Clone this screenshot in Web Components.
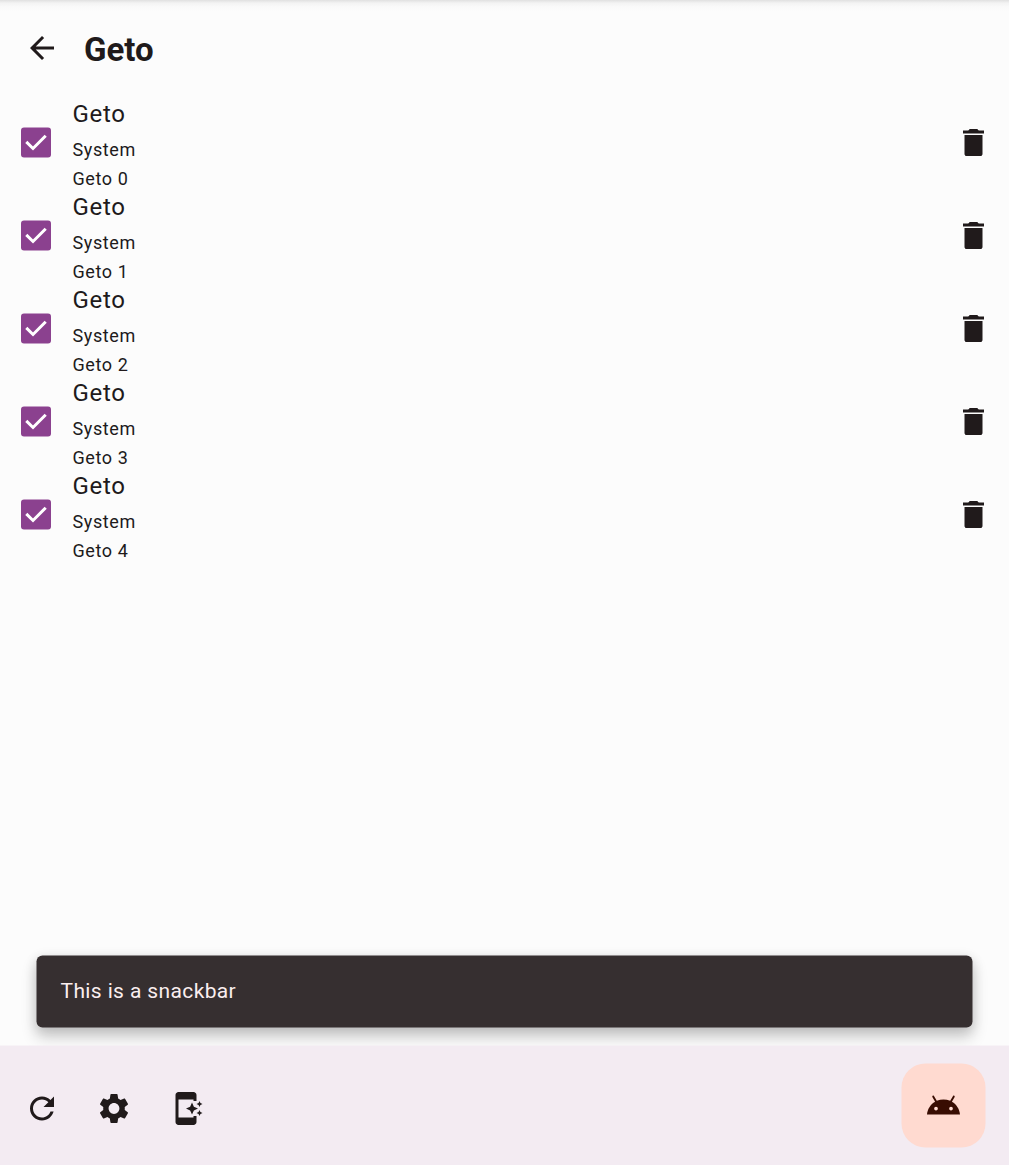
<!DOCTYPE html>
<html lang="en"><head><meta charset="utf-8"><title>Geto</title>
<style>html,body{margin:0;height:100%;overflow:hidden}body{font-family:Roboto,sans-serif;color:#201a1b;background:#fcfcfc}</style></head>
<body>
<geto-screen></geto-screen>
<script>
const ICONS = {
 back:'<path d="M20 11H7.83l5.59-5.59L12 4l-8 8 8 8 1.41-1.41L7.83 13H20v-2z"/>',
 trash:'<path d="M6 19.6c0 .8.6 1.4 1.4 1.4h9.2c.8 0 1.4-.6 1.4-1.4V7H6v12.6zM19 4h-3.5l-1-1h-5l-1 1H5v2h14V4z"/>',
 refresh:'<path d="M17.65 6.35C16.2 4.9 14.21 4 12 4c-4.42 0-7.99 3.58-7.99 8s3.57 8 7.99 8c3.73 0 6.84-2.55 7.73-6h-2.08c-.82 2.33-3.04 4-5.65 4-3.31 0-6-2.69-6-6s2.69-6 6-6c1.66 0 3.14.69 4.22 1.78L13 11h7V4l-2.35 2.35z"/>',
 gear:'<path d="M19.14 12.94c.04-.3.06-.61.06-.94 0-.32-.02-.64-.07-.94l2.03-1.58c.18-.14.23-.41.12-.61l-1.92-3.32c-.12-.22-.37-.29-.59-.22l-2.39.96c-.5-.38-1.03-.7-1.62-.94l-.36-2.54c-.04-.24-.24-.41-.48-.41h-3.84c-.24 0-.43.17-.47.41l-.36 2.54c-.59.24-1.13.57-1.62.94l-2.39-.96c-.22-.08-.47 0-.59.22L2.74 8.87c-.12.21-.08.47.12.61l2.03 1.58c-.05.3-.09.63-.09.94s.02.64.07.94l-2.03 1.58c-.18.14-.23.41-.12.61l1.92 3.32c.12.22.37.29.59.22l2.39-.96c.5.38 1.03.7 1.62.94l.36 2.54c.05.24.24.41.48.41h3.84c.24 0 .44-.17.47-.41l.36-2.54c.59-.24 1.13-.56 1.62-.94l2.39.96c.22.08.47 0 .59-.22l1.92-3.32c.12-.22.07-.47-.12-.61l-2.01-1.58zM12 15.6c-1.98 0-3.6-1.62-3.6-3.6s1.62-3.6 3.6-3.6 3.6 1.62 3.6 3.6-1.62 3.6-3.6 3.6z"/>',
 shortcut:'<path d="M17 18H7V6h10v1h2V3c0-1.1-.9-2-2-2H7c-1.1 0-2 .9-2 2v18c0 1.1.9 2 2 2h10c1.1 0 2-.9 2-2v-4h-2v1z"/><path d="M16 8l1.25 2.75L20 12l-2.75 1.25L16 16l-1.25-2.75L12 12l2.75-1.25zM21 7l.62 1.38L23 9l-1.38.62L21 11l-.62-1.38L19 9l1.38-.62zM21 13l.62 1.38L23 15l-1.38.62L21 17l-.62-1.38L19 15l1.38-.62z"/>',
 android:'<path d="M17.6 9.48l1.84-3.18c.16-.31.04-.69-.26-.85-.29-.15-.65-.06-.83.22l-1.88 3.24a11.46 11.46 0 0 0-8.94 0L5.65 5.67c-.19-.29-.58-.38-.87-.2-.28.18-.37.54-.22.83L6.4 9.48C3.3 11.25 1.28 14.44 1 18h22c-.28-3.56-2.3-6.75-5.4-8.52zM7 15.25a1.25 1.25 0 1 1 0-2.5 1.25 1.25 0 0 1 0 2.5zm10 0a1.25 1.25 0 1 1 0-2.5 1.25 1.25 0 0 1 0 2.5z"/>',
};
class Base extends HTMLElement{ constructor(){super();this.attachShadow({mode:'open'});} connectedCallback(){this.shadowRoot.innerHTML=this.view();} }
customElements.define('geto-icon',class extends Base{view(){return `<style>:host{display:flex;flex:none;width:72px;height:72px;align-items:center;justify-content:center}svg{display:block;width:36px;height:36px;fill:currentColor}</style><svg viewBox="0 0 24 24">${ICONS[this.getAttribute('name')]}</svg>`}});
customElements.define('geto-checkbox',class extends Base{view(){return `<style>:host{display:flex;flex:none;width:72px;justify-content:center}svg{width:30px;height:31px}</style><svg viewBox="0 0 30 31"><g transform="translate(0 .5)"><rect width="30" height="30" rx="3" fill="#8b418f"/><path d="M5.3 14.4 12 21 24.7 8.2" fill="none" stroke="#fff" stroke-width="3"/></g></svg>`}});
customElements.define('geto-top-bar',class extends Base{view(){return `<style>:host{display:flex;flex:none;height:96px;box-sizing:border-box;padding-left:6px;align-items:center;background:linear-gradient(#e0e0e0,#f3f3f3 3px,#fafafa 7px,#fcfcfc 11px)}h1{margin:3px 0 0 6px;font-size:33px;line-height:42px;font-weight:700}</style><geto-icon name="back"></geto-icon><h1><slot></slot></h1>`}});
customElements.define('geto-setting',class extends Base{view(){return `<style>:host{display:flex;align-items:center;height:93px}.t{flex:1;display:flex;flex-direction:column;height:93px;padding-left:.5px;font-size:18px;line-height:24px;letter-spacing:.6px}.a{font-size:24px;line-height:36px;letter-spacing:.7px}.b{margin-top:6px}.c{margin-top:5px}geto-icon{margin-top:1px;transform:translate(.5px,-.5px)}</style><geto-checkbox></geto-checkbox><div class="t"><div class="a">Geto</div><div class="b">System</div><div class="c"><slot></slot></div></div><geto-icon name="trash"></geto-icon>`}});
customElements.define('geto-snackbar',class extends Base{view(){return `<style>:host{display:flex;flex:none;align-items:center;height:72px;margin:0 36px 18px 37px;padding:0 0 2px 24px;box-sizing:border-box;background:#362f30;color:#faeeef;border-radius:6px;font-size:21px;line-height:30px;letter-spacing:.375px;transform:translate(-.5px,-.5px);box-shadow:0 9px 15px rgba(0,0,0,.2),0 2px 12px rgba(0,0,0,.1)}</style><span><slot></slot></span>`}});
customElements.define('geto-fab',class extends Base{view(){return `<style>:host{display:flex;width:84px;height:84px;align-items:center;justify-content:center;border-radius:24px;background:#ffdad0;color:#380d02;transform:translate(.5px,-.5px)}</style><geto-icon name="android"></geto-icon>`}});
customElements.define('geto-bottom-bar',class extends Base{view(){return `<style>:host{display:flex;flex:none;height:119px;box-sizing:border-box;background:#f3ebf2;box-shadow:0 -.5px #f3ebf2;padding:18px 24px 0 6px;align-items:flex-start;position:relative}nav{display:flex;flex:1;padding-top:9px;transform:translateY(-.5px)}</style><nav><geto-icon name="refresh"></geto-icon><geto-icon name="gear"></geto-icon><geto-icon name="shortcut"></geto-icon></nav><geto-fab></geto-fab>`}});
customElements.define('geto-screen',class extends Base{view(){return `<style>:host{display:flex;flex-direction:column;height:100vh}main{flex:1}</style><geto-top-bar>Geto</geto-top-bar><main>${[0,1,2,3,4].map(i=>`<geto-setting>Geto ${i}</geto-setting>`).join('')}</main><geto-snackbar>This is a snackbar</geto-snackbar><geto-bottom-bar></geto-bottom-bar>`}});
</script></body></html>
